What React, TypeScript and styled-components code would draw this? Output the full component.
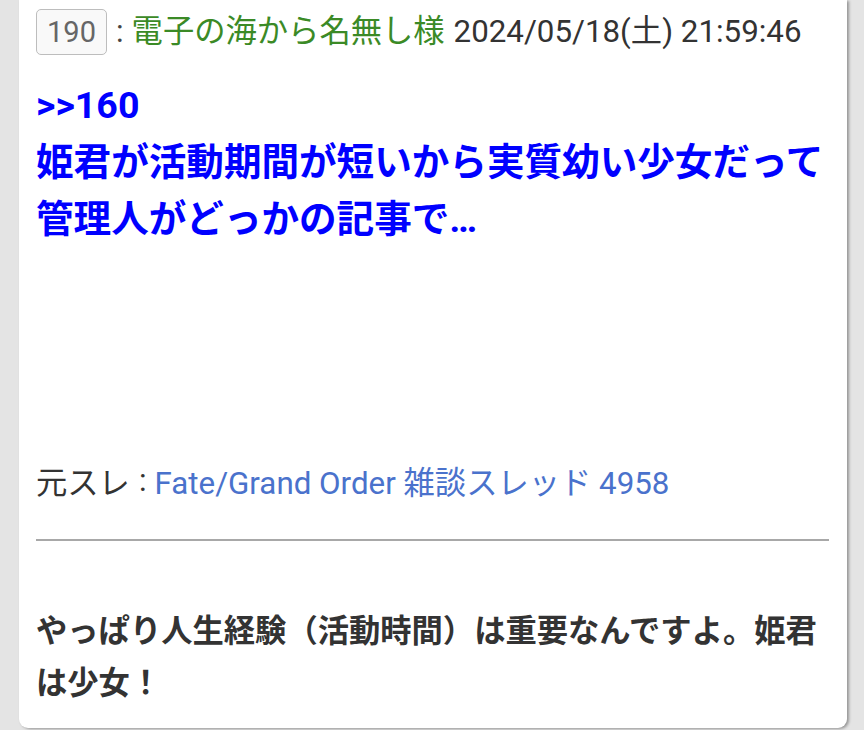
import styled, { createGlobalStyle } from 'styled-components';

const GlobalStyle = createGlobalStyle`
  html, body {
    margin: 0;
    padding: 0;
    background: #e4e4e4;
    font-family: 'Roboto', 'Noto Sans CJK JP', sans-serif;
  }
`;

const Page = styled.div`
  box-sizing: border-box;
  width: 864px;
  height: 730px;
  padding: 0 17px 2px 19px;
  overflow: hidden;
`;

const Card = styled.article`
  box-sizing: border-box;
  height: 728px;
  padding: 9px 18px 0 17px;
  background: #fff;
  border-radius: 0 0 9px 9px;
  box-shadow: 2px 1px 3px rgba(0, 0, 0, 0.35);
  font-size: 31.3px;
`;

const Header = styled.header`
  display: flex;
  align-items: center;
  height: 46px;
  white-space: nowrap;
  line-height: 1;
`;

const ResNumber = styled.span`
  box-sizing: border-box;
  display: inline-flex;
  align-items: center;
  justify-content: center;
  width: 71px;
  height: 46px;
  border: 1px solid #bdbdbd;
  border-radius: 5px;
  background: #f9f9f9;
  color: #666;
  font-size: 29px;
`;

const Colon = styled.span<{ $color?: string }>`
  margin: 0 8px 0 9px;
  color: ${p => p.$color || '#444'};
`;

const Name = styled.span`
  color: #3b8a26;
`;

const Date = styled.span`
  margin-left: 9px;
  color: #333;
`;

const Body = styled.div`
  min-height: 378px;
  padding-top: 22px;
  color: #0000ff;
  font-size: 37.6px;
  font-weight: 700;
  line-height: 57px;
`;

const Source = styled.div`
  display: flex;
  align-items: center;
  height: 50px;
  color: #333;
  white-space: nowrap;
`;

const SourceLink = styled.a`
  color: #4a72cc;
  text-decoration: none;
`;

const Divider = styled.hr`
  margin: 34px 0 0;
  border: none;
  border-top: 2px solid #a8a8a8;
`;

const Comment = styled.p`
  margin: 0;
  padding-top: 65px;
  color: #333;
  font-weight: 700;
  line-height: 52px;
`;

const App = () => {
  return (
    <Page>
      <GlobalStyle />
      <Card>
        <Header>
          <ResNumber>190</ResNumber>
          <Colon>:</Colon>
          <Name>電子の海から名無し様</Name>
          <Date>2024/05/18(土) 21:59:46</Date>
        </Header>
        <Body>
          &gt;&gt;160
          <br />
          姫君が活動期間が短いから実質幼い少女だって管理人がどっかの記事で…
        </Body>
        <Source>
          元スレ
          <Colon $color="#333">:</Colon>
          <SourceLink href="#">Fate/Grand Order 雑談スレッド 4958</SourceLink>
        </Source>
        <Divider />
        <Comment>やっぱり人生経験（活動時間）は重要なんですよ。姫君は少女！</Comment>
      </Card>
    </Page>
  );
};

export default App;
